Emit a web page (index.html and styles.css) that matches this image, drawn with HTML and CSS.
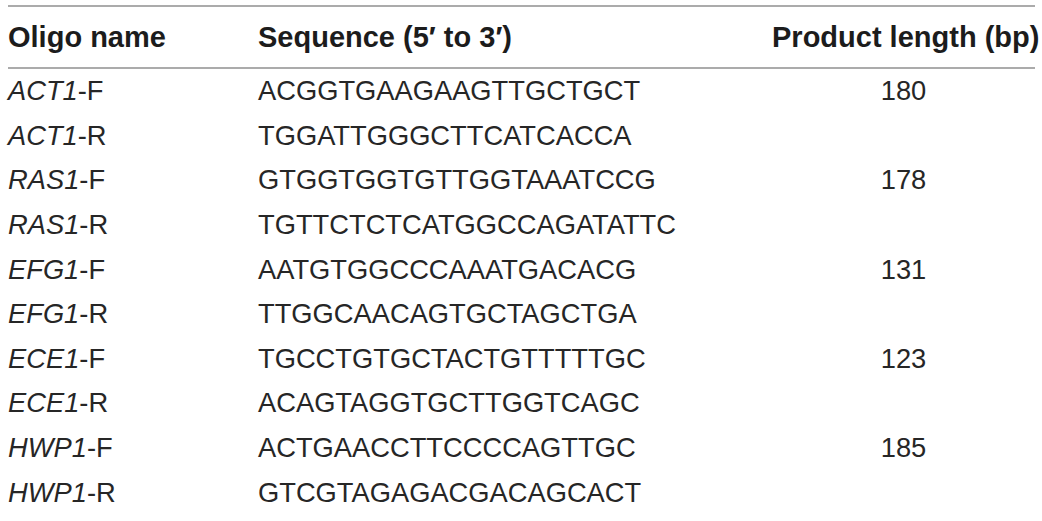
FILE: index.html
```html
<!DOCTYPE html>
<html lang="en">
<head>
<meta charset="utf-8">
<title>Primers</title>
<link rel="stylesheet" href="styles.css">
</head>
<body>
<div class="table">
  <div class="head row">
    <div class="c1">Oligo name</div>
    <div class="c2">Sequence (5′ to 3′)</div>
    <div class="c3">Product length (bp)</div>
  </div>
  <div class="body">
    <div class="row"><div class="c1"><i>ACT1</i>-F</div><div class="c2">ACGGTGAAGAAGTTGCTGCT</div><div class="c3 num">180</div></div>
    <div class="row"><div class="c1"><i>ACT1</i>-R</div><div class="c2">TGGATTGGGCTTCATCACCA</div><div class="c3 num"></div></div>
    <div class="row"><div class="c1"><i>RAS1</i>-F</div><div class="c2">GTGGTGGTGTTGGTAAATCCG</div><div class="c3 num">178</div></div>
    <div class="row"><div class="c1"><i>RAS1</i>-R</div><div class="c2">TGTTCTCTCATGGCCAGATATTC</div><div class="c3 num"></div></div>
    <div class="row"><div class="c1"><i>EFG1</i>-F</div><div class="c2">AATGTGGCCCAAATGACACG</div><div class="c3 num">131</div></div>
    <div class="row"><div class="c1"><i>EFG1</i>-R</div><div class="c2">TTGGCAACAGTGCTAGCTGA</div><div class="c3 num"></div></div>
    <div class="row"><div class="c1"><i>ECE1</i>-F</div><div class="c2">TGCCTGTGCTACTGTTTTTGC</div><div class="c3 num">123</div></div>
    <div class="row"><div class="c1"><i>ECE1</i>-R</div><div class="c2">ACAGTAGGTGCTTGGTCAGC</div><div class="c3 num"></div></div>
    <div class="row"><div class="c1"><i>HWP1</i>-F</div><div class="c2">ACTGAACCTTCCCCAGTTGC</div><div class="c3 num">185</div></div>
    <div class="row"><div class="c1"><i>HWP1</i>-R</div><div class="c2">GTCGTAGAGACGACAGCACT</div><div class="c3 num"></div></div>
  </div>
</div>
</body>
</html>
```

FILE: styles.css
```css
html, body {
  margin: 0;
  padding: 0;
  background: #fff;
}

body {
  font-family: "Liberation Sans", Arial, sans-serif;
  color: #262626;
}

.table {
  margin: 5px 7px 0 8px;
  border-top: 2px solid #ababab;
}

.row {
  display: grid;
  grid-template-columns: 250px 1fr 263px;
  align-items: center;
}

.head {
  height: 62px;
  border-bottom: 2px solid #ababab;
  font-weight: bold;
  font-size: 29px;
  color: #1c1c1c;
  padding-top: 1px;
  box-sizing: border-box;
}

.head .c3 {
  text-align: right;
  white-space: nowrap;
}

.body .row {
  height: 44.6px;
  font-size: 27.3px;
}

.num {
  text-align: center;
}

i {
  font-style: italic;
}
```
